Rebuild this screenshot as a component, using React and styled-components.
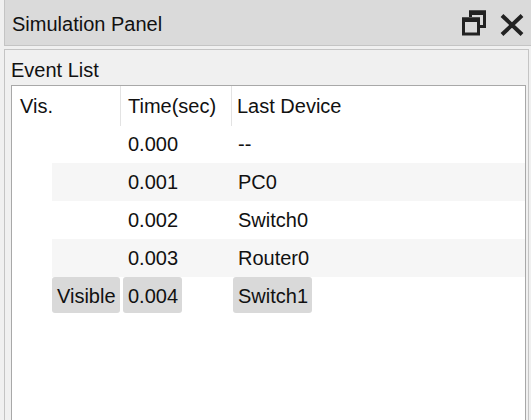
import React from "react";
import styled, { createGlobalStyle } from "styled-components";

const GlobalStyle = createGlobalStyle`
  html, body {
    margin: 0;
    padding: 0;
    background: #f0f0f0;
  }
  * {
    box-sizing: border-box;
  }
`;

const Page = styled.div`
  width: 531px;
  height: 420px;
  overflow: hidden;
  background: #f0f0f0;
  padding-left: 4px;
  display: flex;
  flex-direction: column;
  font-family: "Liberation Sans", Arial, sans-serif;
  font-size: 20px;
  color: #111;
`;

const TitleBar = styled.div`
  height: 46px;
  flex-shrink: 0;
  background: #dadada;
  border-left: 1px solid #c4c4c4;
  border-bottom: 1px solid #c4c4c4;
  display: flex;
  align-items: center;
  justify-content: space-between;
  padding: 0 6px 0 7px;
`;

const Title = styled.span`
  font-size: 20px;
  padding-top: 4px;
`;

const TitleButtons = styled.div`
  display: flex;
  align-items: flex-end;
  height: 27px;
  gap: 12px;
`;

const IconButton = styled.button`
  border: 0;
  background: none;
  padding: 0;
  display: flex;
  color: #222;
`;

const Panel = styled.div`
  flex: 1;
  margin-top: 3px;
  margin-right: 2px;
  border: 1px solid #c4c4c4;
  border-bottom: 0;
  display: flex;
  flex-direction: column;
  padding: 0 2px 0 6px;
`;

const PanelLabel = styled.div`
  height: 35px;
  line-height: 40px;
`;

const Table = styled.div`
  flex: 1;
  background: #fff;
  border: 1px solid #a8a8a8;
  border-bottom: 0;
`;

const HeaderRow = styled.div`
  display: grid;
  grid-template-columns: 109px 111px 1fr;
  height: 39px;
`;

const HeaderCell = styled.div`
  line-height: 40px;
  padding-left: ${(p) => p.$pad}px;
  border-right: ${(p) => (p.$divider ? "1px solid #e3e3e3" : "0")};
`;

const Row = styled.div`
  display: grid;
  grid-template-columns: 69px 111px 1fr;
  margin-left: 40px;
  height: 38px;
  background: ${(p) => (p.$alt ? "#f6f6f6" : "transparent")};
`;

const Cell = styled.div`
  padding-left: ${(p) => p.$offset}px;
`;

const Chip = styled.span`
  display: inline-block;
  height: 36px;
  line-height: 38px;
  padding: 0 4px 0 5px;
  border-radius: 3px;
  background: ${(p) => (p.$selected ? "#d9d9d9" : "transparent")};
`;

const RestoreIcon = () => (
  <svg width="26" height="27" viewBox="0 0 26 27" fill="none">
    <path d="M9.5 8 V3 H23.5 V17.5 H18" stroke="currentColor" strokeWidth="3" />
    <rect x="8" y="1.5" width="17" height="4.5" fill="currentColor" />
    <rect x="2.5" y="10" width="15" height="15" stroke="currentColor" strokeWidth="3" />
    <rect x="1" y="8.5" width="18" height="4.5" fill="currentColor" />
  </svg>
);

const CloseIcon = () => (
  <svg width="26" height="22" viewBox="0 0 26 22" fill="none">
    <path d="M3 1.5 L23 20.5 M23 1.5 L3 20.5" stroke="currentColor" strokeWidth="4" />
  </svg>
);

const events = [
  { id: 0, vis: "", time: "0.000", device: "--" },
  { id: 1, vis: "", time: "0.001", device: "PC0" },
  { id: 2, vis: "", time: "0.002", device: "Switch0" },
  { id: 3, vis: "", time: "0.003", device: "Router0" },
  { id: 4, vis: "Visible", time: "0.004", device: "Switch1", selected: true },
];

const App = () => {
  return (
    <>
      <GlobalStyle />
      <Page>
        <TitleBar>
          <Title>Simulation Panel</Title>
          <TitleButtons>
            <IconButton aria-label="Restore">
              <RestoreIcon />
            </IconButton>
            <IconButton aria-label="Close">
              <CloseIcon />
            </IconButton>
          </TitleButtons>
        </TitleBar>
        <Panel>
          <PanelLabel>Event List</PanelLabel>
          <Table>
            <HeaderRow>
              <HeaderCell $pad={8} $divider>
                Vis.
              </HeaderCell>
              <HeaderCell $pad={7} $divider>
                Time(sec)
              </HeaderCell>
              <HeaderCell $pad={5}>Last Device</HeaderCell>
            </HeaderRow>
            {events.map((item) => (
              <Row key={item.id} $alt={item.id % 2 === 1}>
                <Cell $offset={0}>
                  {item.vis && <Chip $selected={item.selected}>{item.vis}</Chip>}
                </Cell>
                <Cell $offset={2}>
                  <Chip $selected={item.selected}>{item.time}</Chip>
                </Cell>
                <Cell $offset={1}>
                  <Chip $selected={item.selected}>{item.device}</Chip>
                </Cell>
              </Row>
            ))}
          </Table>
        </Panel>
      </Page>
    </>
  );
};

export default App;
